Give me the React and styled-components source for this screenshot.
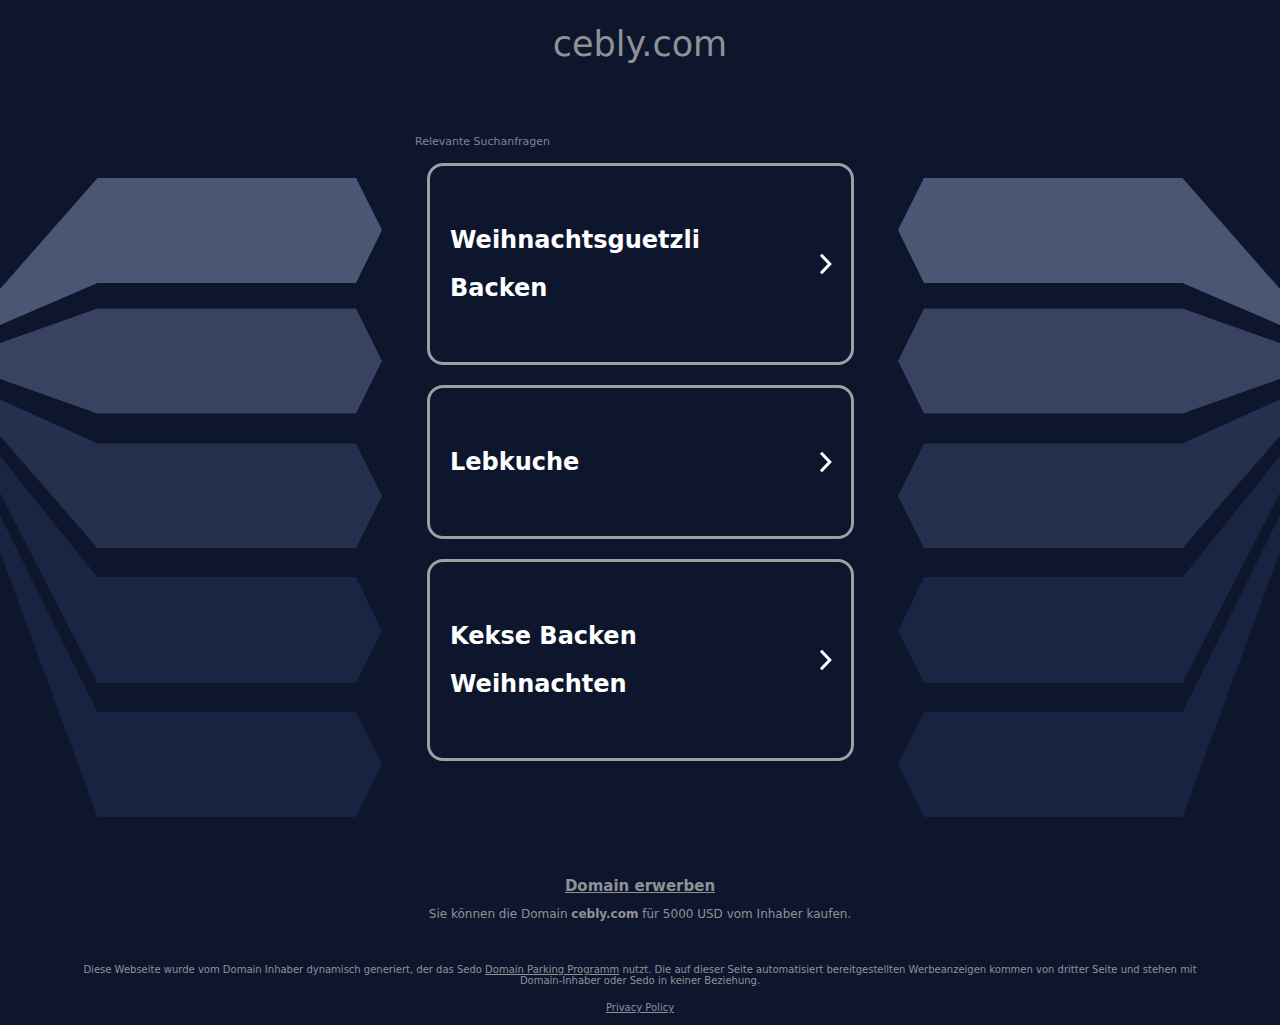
// src/App.jsx
import styled, { createGlobalStyle } from "styled-components";

const searches = ["Weihnachtsguetzli Backen", "Lebkuche", "Kekse Backen Weihnachten"];

const ribbons = [
  { color: "#4b5674", points: "0,111 97.5,0 356,0 382,52 356,105 97.5,105 0,147" },
  { color: "#394261", points: "0,165 97.5,130.5 356,130.5 382,183 356,235.5 97.5,235.5 0,201" },
  { color: "#252f4e", points: "0,221.5 97.5,265.5 356,265.5 382,318 356,370 97.5,370 0,258" },
  { color: "#1a2443", points: "0,278 97.5,399 356,399 382,453 356,505 97.5,505 0,315" },
  { color: "#182241", points: "0,337 97.5,534 356,534 382,586 356,639 97.5,639 0,374" },
];

const Ribbons = ({ mirrored }) => (
  <Fan viewBox="0 0 382 639" $mirrored={mirrored} aria-hidden="true">
    {ribbons.map((ribbon) => (
      <polygon key={ribbon.color} points={ribbon.points} fill={ribbon.color} />
    ))}
  </Fan>
);

const App = () => {
  return (
    <Page>
      <GlobalStyle />
      <Header>
        <h1>cebly.com</h1>
      </Header>

      <Main>
        <Ribbons />
        <Related>
          <RelatedTitle>Relevante Suchanfragen</RelatedTitle>
          <CardList>
            {searches.map((search) => (
              <li key={search}>
                <Card href="#">
                  <span>{search}</span>
                  <Arrow viewBox="0 0 12 22" aria-hidden="true">
                    <path d="M1 1.8L9.8 11L1 20.2" />
                  </Arrow>
                </Card>
              </li>
            ))}
          </CardList>
        </Related>
        <Ribbons mirrored />
      </Main>

      <BuyBox>
        <BuyLink href="#">Domain erwerben</BuyLink>
        <p>
          Sie können die Domain <strong>cebly.com</strong> für 5000 USD vom Inhaber kaufen.
        </p>
      </BuyBox>

      <Footer>
        <p>
          Diese Webseite wurde vom Domain Inhaber dynamisch generiert, der das Sedo{" "}
          <a href="#">Domain Parking Programm</a> nutzt. Die auf dieser Seite automatisiert
          bereitgestellten Werbeanzeigen kommen von dritter Seite und stehen mit Domain-Inhaber
          oder Sedo in keiner Beziehung.
        </p>
        <a href="#">Privacy Policy</a>
      </Footer>
    </Page>
  );
};

export default App;

const GlobalStyle = createGlobalStyle`
  body {
    margin: 0;
    background: #0e162e;
    font-family: "DejaVu Sans", Verdana, sans-serif;
  }

  h1, h2, p, ul {
    margin: 0;
    padding: 0;
  }
`;

const Page = styled.div`
  color: #8e9295;
`;

const Header = styled.header`
  padding: 20px 16px 64px;
  text-align: center;

  h1 {
    font-size: 35px;
    font-weight: 400;
    line-height: 48px;
  }
`;

/* Ribbons hug both window edges, the results stay centred */
const Main = styled.main`
  display: flex;
  justify-content: space-between;
  align-items: flex-start;
`;

const Fan = styled.svg`
  width: 382px;
  min-width: 0;
  flex-shrink: 1;
  margin-top: 46px;
  transform: ${(props) => (props.$mirrored ? "scaleX(-1)" : "none")};
`;

const Related = styled.section`
  width: 450px;
  flex-shrink: 0;
`;

const RelatedTitle = styled.h2`
  padding: 3px 0 14px;
  font-size: 11px;
  font-weight: 400;
  line-height: 14px;
  color: #7f8594;
`;

const CardList = styled.ul`
  display: flex;
  flex-direction: column;
  gap: 20px;
  padding: 0 11px 0 12px;
  list-style: none;
`;

const Card = styled.a`
  display: flex;
  align-items: center;
  justify-content: space-between;
  gap: 20px;
  padding: 50px 19px 50px 20px;
  border: 3px solid #9f9fa2;
  border-radius: 16px;
  color: #ffffff;
  font-size: 24px;
  font-weight: 700;
  line-height: 48px;
  text-decoration: none;
`;

const Arrow = styled.svg`
  width: 12px;
  height: 22px;
  flex-shrink: 0;
  fill: none;
  stroke: #ffffff;
  stroke-width: 3;
  overflow: visible;
`;

const BuyBox = styled.section`
  display: flex;
  flex-direction: column;
  align-items: center;
  gap: 12px;
  padding: 60px 16px 43px;
  font-size: 12px;
  line-height: 14px;
`;

const BuyLink = styled.a`
  color: inherit;
  font-size: 15px;
  font-weight: 700;
  line-height: 18px;
`;

const Footer = styled.footer`
  display: flex;
  flex-direction: column;
  align-items: center;
  gap: 16px;
  padding: 0 72px 12px;
  font-size: 10px;
  line-height: 11px;
  text-align: center;

  a { color: inherit; }
`;
